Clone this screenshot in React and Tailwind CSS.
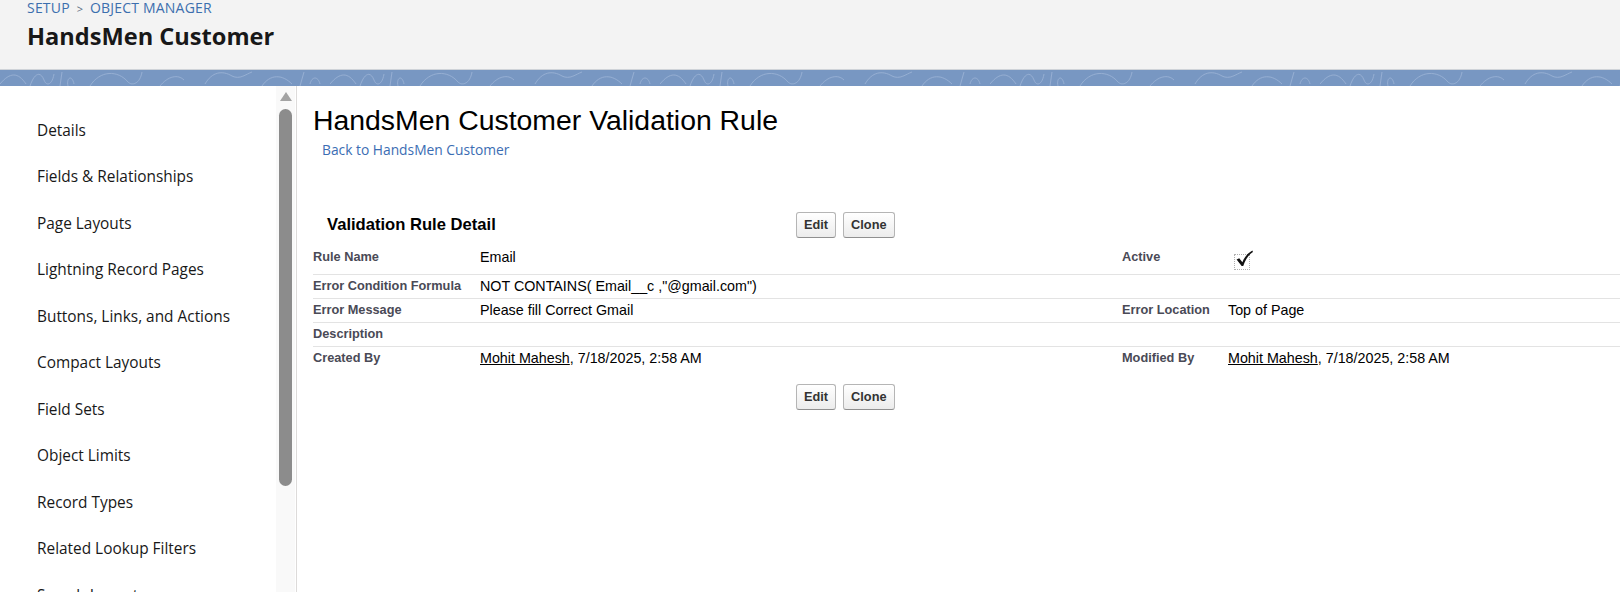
const sideItems = [
  "Details",
  "Fields & Relationships",
  "Page Layouts",
  "Lightning Record Pages",
  "Buttons, Links, and Actions",
  "Compact Layouts",
  "Field Sets",
  "Object Limits",
  "Record Types",
  "Related Lookup Filters",
  "Search Layouts",
];

const Band = () => (
  <div className="h-[17px] border-t border-[#cfd3d8] bg-[#7897c2] overflow-hidden">
    <svg width="1620" height="16" className="block">
      <defs>
        <pattern id="swirl" width="330" height="16" patternUnits="userSpaceOnUse">
          <g fill="none" stroke="#9db4d6" strokeWidth="1" opacity="0.8">
            <path d="M0 14 C10 2, 18 2, 26 14" />
            <path d="M30 16 C34 4, 40 0, 44 10 C46 16, 52 16, 54 4" />
            <path d="M60 16 L62 2 M68 16 C66 8, 72 4, 74 14" />
            <path d="M90 16 C100 0, 118 0, 128 12 C132 16, 140 14, 142 2" />
            <path d="M160 16 C168 6, 178 4, 184 10" />
            <path d="M205 14 C212 2, 222 0, 232 6 C240 10, 246 4, 252 2" />
            <path d="M262 16 C270 4, 282 4, 292 14" />
            <path d="M300 16 L304 2 M310 14 C312 6, 318 6, 320 14" />
          </g>
        </pattern>
      </defs>
      <rect width="1620" height="16" fill="url(#swirl)" />
    </svg>
  </div>
);

const Btn = ({ children }) => (
  <button className="h-[26px] px-[7px] rounded-[3px] border border-[#b5b5b5] border-b-[#8f8f8f] bg-gradient-to-b from-white to-[#ececec] text-[12.75px] font-bold text-[#333] font-['Liberation_Sans',Arial,sans-serif]">
    {children}
  </button>
);

const Buttons = () => (
  <div className="flex gap-[7px]">
    <Btn>Edit</Btn>
    <Btn>Clone</Btn>
  </div>
);

const CheckImg = () => (
  <div className="relative w-[16px] h-[16px] mt-[5px] ml-[6px] border border-dotted border-[#b0b0b0]">
    <svg width="19" height="17" viewBox="0 0 18 16" className="absolute -top-[5px] left-[0px]">
      <path d="M1.5 9 L4 7.8 L7 11.5 C9 6.5, 12 3, 16.5 0.5 L17 1.8 C13 4.5, 10 8.5, 7.8 15 L6.3 15 Z" fill="#111" />
    </svg>
  </div>
);

const Row = ({ l1, v1, l2, v2, tall, last }) => (
  <div className={`grid grid-cols-[167px_642px_106px_1fr] ${tall ? "h-[29px]" : "h-[24px]"} ${last ? "" : "border-b border-[#e3e3e3]"}`}>
    <div className="pt-[3px] text-[12.75px] font-bold text-[#4a4a56] leading-[16px]">{l1}</div>
    <div className="pt-[3px] text-[14.3px] text-black leading-[16px]">{v1}</div>
    <div className="pt-[3px] text-[12.75px] font-bold text-[#4a4a56] leading-[16px]">{l2}</div>
    <div className="pt-[3px] text-[14.3px] text-black leading-[16px]">{v2}</div>
  </div>
);

const Who = () => (
  <span>
    <span className="underline">Mohit Mahesh</span>, 7/18/2025, 2:58 AM
  </span>
);

export default function App() {
  return (
    <div className="w-[1620px] h-[592px] overflow-hidden flex flex-col bg-white">
      <header className="h-[69px] shrink-0 bg-[#f3f3f3] px-[27px] font-['Open_Sans',sans-serif]">
        <div className="-mt-[1px] text-[14px] leading-[18px] text-[#3c6fae] tracking-[0.2px]">
          SETUP <span className="text-[#5a6d82] text-[11px] mx-[3px]">&gt;</span> OBJECT MANAGER
        </div>
        <h1 className="mt-[3px] text-[23.6px] leading-[30px] font-bold text-[#181818]">HandsMen Customer</h1>
      </header>
      <Band />
      <div className="flex flex-1 min-h-0">
        <aside className="w-[297px] shrink-0 flex border-r border-[#dddbda] font-['Open_Sans',sans-serif]">
          <nav className="flex-1 pt-[21px] pl-[37px]">
            {sideItems.map((t) => (
              <div key={t} className="h-[46.5px] flex items-center text-[15.4px] text-[#181818] whitespace-nowrap">
                {t}
              </div>
            ))}
          </nav>
          <div className="w-[19px] bg-[#f9f9f9] flex flex-col items-center pt-[6px] mr-[1px]">
            <div className="w-0 h-0 border-l-[6px] border-r-[6px] border-b-[9px] border-l-transparent border-r-transparent border-b-[#a3a3a3]" />
            <div className="mt-[8px] w-[13px] h-[377px] rounded-[7px] bg-[#8c8c8c]" />
          </div>
        </aside>
        <main className="flex-1 min-w-0 pt-[18px] pl-[16px] font-['Liberation_Sans',Arial,sans-serif]">
          <h2 className="text-[28.4px] leading-[32px] text-black">HandsMen Customer Validation Rule</h2>
          <a className="block mt-[4px] ml-[9px] text-[13.8px] leading-[19px] text-[#3b6db3] font-['Open_Sans',sans-serif]">
            Back to HandsMen Customer
          </a>
          <div className="mt-[53px] flex items-center h-[26px]">
            <div className="w-[483px] pl-[14px] text-[16.6px] font-bold text-black">Validation Rule Detail</div>
            <Buttons />
          </div>
          <div className="mt-[8px]">
            <Row l1="Rule Name" v1="Email" l2="Active" v2={<CheckImg />} tall />
            <Row l1="Error Condition Formula" v1={'NOT CONTAINS( Email__c ,"@gmail.com")'} />
            <Row l1="Error Message" v1="Please fill Correct Gmail" l2="Error Location" v2="Top of Page" />
            <Row l1="Description" />
            <Row l1="Created By" v1={<Who />} l2="Modified By" v2={<Who />} last />
          </div>
          <div className="mt-[13px] pl-[483px]">
            <Buttons />
          </div>
        </main>
      </div>
    </div>
  );
}
